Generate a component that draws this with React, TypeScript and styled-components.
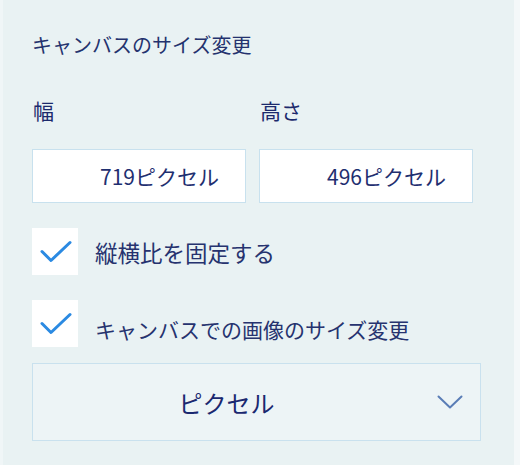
import styled, { createGlobalStyle } from "styled-components";

const GlobalStyle = createGlobalStyle`
  body {
    margin: 0;
    background: #e9f2f3;
    font-family: "Noto Sans CJK JP", "Noto Sans", sans-serif;
  }
`;

const Check = () => (
  <svg width="32" height="24" viewBox="0 0 32 24" fill="none">
    <path
      d="M2 11.5 L11 20.5 L30 2.5"
      stroke="#2b8ae2"
      strokeWidth="3"
      strokeLinecap="round"
      strokeLinejoin="round"
    />
  </svg>
);

const Chevron = () => (
  <svg width="26" height="14" viewBox="0 0 26 14" fill="none">
    <path
      d="M1.5 1.5 L13 12.5 L24.5 1.5"
      stroke="#5a7db6"
      strokeWidth="2"
      strokeLinecap="round"
      strokeLinejoin="round"
    />
  </svg>
);

const CanvasSizePanel = () => {
  return (
    <Panel>
      <Title>キャンバスのサイズ変更</Title>
      <SizeGrid>
        <FieldLabel>幅</FieldLabel>
        <FieldLabel>高さ</FieldLabel>
        <SizeInput>719ピクセル</SizeInput>
        <SizeInput>496ピクセル</SizeInput>
      </SizeGrid>
      <CheckRow>
        <CheckBox>
          <Check />
        </CheckBox>
        <CheckLabel $size={22.5}>縦横比を固定する</CheckLabel>
      </CheckRow>
      <CheckRow $tight>
        <CheckBox>
          <Check />
        </CheckBox>
        <CheckLabel $drop>キャンバスでの画像のサイズ変更</CheckLabel>
      </CheckRow>
      <Dropdown>
        <DropdownValue>ピクセル</DropdownValue>
        <DropdownArrow>
          <Chevron />
        </DropdownArrow>
      </Dropdown>
    </Panel>
  );
};

export default function App() {
  return (
    <>
      <GlobalStyle />
      <CanvasSizePanel />
    </>
  );
}

const Panel = styled.div`
  box-sizing: border-box;
  width: 520px;
  height: 465px;
  padding: 33px 0 0 29px;
  background: #e9f2f3;
  border-left: 3px solid #f0f6f7;
  border-right: 6px solid #f4f8f9;
  color: #1c2a6c;
  overflow: hidden;
`;

const Title = styled.div`
  font-size: 20px;
  line-height: 24px;
  color: #24326e;
`;

const SizeGrid = styled.div`
  display: grid;
  grid-template-columns: 214px 214px;
  column-gap: 13px;
  row-gap: 26px;
  margin-top: 40px;
`;

const FieldLabel = styled.div`
  font-size: 21px;
  line-height: 26px;
  padding-left: 1px;
`;

const SizeInput = styled.div`
  box-sizing: border-box;
  height: 54px;
  display: flex;
  align-items: center;
  justify-content: flex-end;
  padding-right: 26px;
  background: #ffffff;
  border: 1.5px solid #c8e1ee;
  font-size: 21px;
  color: #1f2f70;
`;

const CheckRow = styled.div<{ $tight?: boolean }>`
  display: flex;
  align-items: center;
  gap: 17px;
  margin-top: 25px;
  margin-bottom: ${(p) => (p.$tight ? "16px" : "0")};
`;

const CheckBox = styled.div`
  box-sizing: border-box;
  width: 46px;
  height: 47px;
  display: flex;
  align-items: center;
  padding-left: 8px;
  background: #ffffff;
  flex-shrink: 0;
`;

const CheckLabel = styled.div<{ $drop?: boolean; $size?: number }>`
  font-size: ${(p) => p.$size ?? 21}px;
  line-height: 26px;
  color: #26336f;
  transform: ${(p) => (p.$drop ? "translateY(5px)" : "none")};
`;

const Dropdown = styled.div`
  box-sizing: border-box;
  width: 449px;
  height: 78px;
  display: flex;
  align-items: center;
  background: #edf4f6;
  border: 1.5px solid #c9e1ee;
`;

const DropdownValue = styled.div`
  flex: 1;
  text-align: center;
  font-size: 24px;
  font-weight: 400;
  color: #1a2870;
`;

const DropdownArrow = styled.div`
  width: 60px;
  display: flex;
  justify-content: center;
  align-items: center;
`;
